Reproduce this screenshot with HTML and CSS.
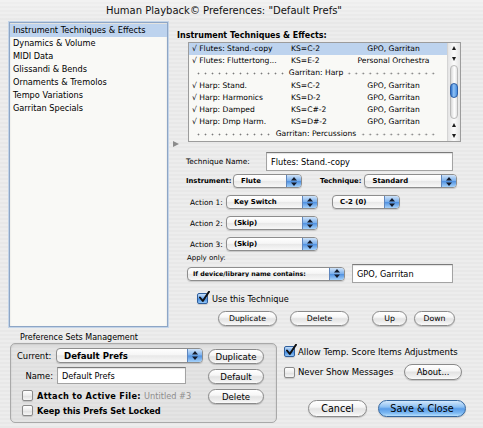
FILE: index.html
```html
<!DOCTYPE html>
<html>
<head>
<meta charset="utf-8">
<title>Human Playback Preferences</title>
<link rel="stylesheet" href="styles.css">
</head>
<body>
<div class="window">
  <div class="titlebar">Human Playback© Preferences: "Default Prefs"</div>

  <div class="top">
    <ul class="cats">
      <li class="sel">Instrument Techniques &amp; Effects</li>
      <li>Dynamics &amp; Volume</li>
      <li>MIDI Data</li>
      <li>Glissandi &amp; Bends</li>
      <li>Ornaments &amp; Tremolos</li>
      <li>Tempo Variations</li>
      <li>Garritan Specials</li>
    </ul>

    <div class="panel">
      <div class="heading">Instrument Techniques &amp; Effects:</div>
      <div class="tablerow">
        <span class="disclosure"></span>
        <div class="table">
          <div class="rows">
            <div class="row sel"><span class="c1">√ Flutes: Stand.-copy</span><span class="c2">KS=C-2</span><span class="c3">GPO, Garritan</span></div>
            <div class="row"><span class="c1">√ Flutes: Fluttertong...</span><span class="c2">KS=E-2</span><span class="c3">Personal Orchestra</span></div>
            <div class="row sep"><span>Garritan: Harp</span></div>
            <div class="row"><span class="c1">√ Harp: Stand.</span><span class="c2">KS=C-2</span><span class="c3">GPO, Garritan</span></div>
            <div class="row"><span class="c1">√ Harp: Harmonics</span><span class="c2">KS=D-2</span><span class="c3">GPO, Garritan</span></div>
            <div class="row"><span class="c1">√ Harp: Damped</span><span class="c2">KS=C#-2</span><span class="c3">GPO, Garritan</span></div>
            <div class="row"><span class="c1">√ Harp: Dmp Harm.</span><span class="c2">KS=D#-2</span><span class="c3">GPO, Garritan</span></div>
            <div class="row sep"><span>Garritan: Percussions</span></div>
          </div>
          <div class="scroll">
            <span class="sa up"></span>
            <span class="sa down"></span>
            <div class="track"><span class="thumb"></span></div>
            <span class="sa up"></span>
            <span class="sa down"></span>
          </div>
        </div>
      </div>

      <div class="frow r-name">
        <span class="lbl l-name">Technique Name:</span>
        <div class="field f-name">Flutes: Stand.-copy</div>
      </div>

      <div class="frow r-inst">
        <span class="lbl bold l-inst">Instrument:</span>
        <div class="popup p-inst"><span class="txt">Flute</span><span class="arr"><svg viewBox="0 0 6 9" width="6" height="9"><path d="M0 3.6L3 0L6 3.6Z M0 5.4L3 9L6 5.4Z"/></svg></span></div>
        <span class="lbl bold l-tech">Technique:</span>
        <div class="popup p-tech"><span class="txt">Standard</span><span class="arr"><svg viewBox="0 0 6 9" width="6" height="9"><path d="M0 3.6L3 0L6 3.6Z M0 5.4L3 9L6 5.4Z"/></svg></span></div>
      </div>

      <div class="frow r-act first">
        <span class="lbl l-act">Action 1:</span>
        <div class="popup p-act"><span class="txt">Key Switch</span><span class="arr"><svg viewBox="0 0 6 9" width="6" height="9"><path d="M0 3.6L3 0L6 3.6Z M0 5.4L3 9L6 5.4Z"/></svg></span></div>
        <div class="popup p-key"><span class="txt">C-2 (0)</span><span class="arr"><svg viewBox="0 0 6 9" width="6" height="9"><path d="M0 3.6L3 0L6 3.6Z M0 5.4L3 9L6 5.4Z"/></svg></span></div>
      </div>
      <div class="frow r-act">
        <span class="lbl l-act">Action 2:</span>
        <div class="popup p-act"><span class="txt">(Skip)</span><span class="arr"><svg viewBox="0 0 6 9" width="6" height="9"><path d="M0 3.6L3 0L6 3.6Z M0 5.4L3 9L6 5.4Z"/></svg></span></div>
      </div>
      <div class="frow r-act">
        <span class="lbl l-act">Action 3:</span>
        <div class="popup p-act"><span class="txt">(Skip)</span><span class="arr"><svg viewBox="0 0 6 9" width="6" height="9"><path d="M0 3.6L3 0L6 3.6Z M0 5.4L3 9L6 5.4Z"/></svg></span></div>
      </div>

      <div class="apply-lbl">Apply only:</div>
      <div class="frow r-apply">
        <div class="popup p-apply"><span class="txt">If device/library name contains:</span><span class="arr"><svg viewBox="0 0 6 9" width="6" height="9"><path d="M0 3.6L3 0L6 3.6Z M0 5.4L3 9L6 5.4Z"/></svg></span></div>
        <div class="field f-apply">GPO, Garritan</div>
      </div>

      <div class="frow r-use">
        <span class="cb on"><svg viewBox="0 0 12 12"><path d="M2 6.5L4.8 10L11 0.8"/></svg></span>
        <span class="cbl">Use this Technique</span>
      </div>

      <div class="frow r-btns">
        <span class="btn b-dup">Duplicate</span>
        <span class="btn b-del">Delete</span>
        <span class="btn b-up">Up</span>
        <span class="btn b-down">Down</span>
      </div>
    </div>
  </div>

  <div class="bottom">
    <div class="prefs">
      <div class="group-lbl">Preference Sets Management</div>
      <div class="group">
        <div class="gleft">
          <div class="frow g-r1">
            <span class="glbl l-cur">Current:</span>
            <div class="popup p-cur"><span class="txt">Default Prefs</span><span class="arr"><svg viewBox="0 0 6 9" width="6" height="9"><path d="M0 3.6L3 0L6 3.6Z M0 5.4L3 9L6 5.4Z"/></svg></span></div>
          </div>
          <div class="frow g-r2">
            <span class="glbl l-nm">Name:</span>
            <div class="field f-nm">Default Prefs</div>
          </div>
          <div class="frow g-r3">
            <span class="cb"></span>
            <span class="cbl strong attach">Attach to Active File: <span class="dim">Untitled #3</span></span>
          </div>
          <div class="frow g-r4">
            <span class="cb"></span>
            <span class="cbl strong">Keep this Prefs Set Locked</span>
          </div>
        </div>
        <div class="gright">
          <span class="btn gbtn">Duplicate</span>
          <span class="btn gbtn">Default</span>
          <span class="btn gbtn">Delete</span>
        </div>
      </div>
    </div>

    <div class="options">
      <div class="frow o-allow">
        <span class="cb on"><svg viewBox="0 0 12 12"><path d="M2 6.5L4.8 10L11 0.8"/></svg></span>
        <span class="cbl big">Allow Temp. Score Items Adjustments</span>
      </div>
      <div class="frow o-never">
        <span class="cb"></span>
        <span class="cbl big never">Never Show Messages</span>
        <span class="btn b-about">About...</span>
      </div>
      <div class="frow o-final">
        <span class="btn lg b-cancel">Cancel</span>
        <span class="btn lg default b-save">Save &amp; Close</span>
      </div>
    </div>
  </div>
</div>
</body>
</html>
```

FILE: styles.css
```css
html, body {
  margin: 0;
  padding: 0;
}
body {
  font-family: "DejaVu Sans", "Noto Sans", sans-serif;
  font-size: 8.2px;
  color: #000;
  background: #e9e9e9;
}
.window {
  width: 483px;
  height: 428px;
  overflow: hidden;
  display: flex;
  flex-direction: column;
  background: repeating-linear-gradient(to bottom, #ededed 0, #ededed 2px, #e8e8e8 2px, #e8e8e8 4px);
}
.titlebar {
  height: 21px;
  flex: none;
  display: flex;
  align-items: center;
  justify-content: center;
  padding-right: 35px;
  font-size: 10px;
  color: #111;
  background: linear-gradient(to bottom, rgba(255,255,255,0.3), rgba(255,255,255,0));
}

/* ---------- top part ---------- */
.top {
  display: flex;
  height: 306px;
  flex: none;
}
.cats {
  list-style: none;
  margin: 1px 0 0 9px;
  padding: 1px 0 0 0;
  width: 159px;
  height: 305px;
  box-sizing: border-box;
  background: #f9f9f6;
  border: 1px solid #8ea6c6;
  box-shadow: 0 0 0 1px #c3d4e8, inset 0 1px 2px rgba(0,0,0,0.12);
}
.cats li {
  height: 13px;
  line-height: 13px;
  padding-left: 3px;
  white-space: nowrap;
  font-size: 8.2px;
}
.cats li.sel {
  background: #bdd3ee;
}

.panel {
  margin-left: 4px;
  flex: 1;
  display: flex;
  flex-direction: column;
}
.heading {
  margin: 9px 0 0 5px;
  font-weight: bold;
  font-size: 8px;
  line-height: 11px;
  height: 11px;
}
.tablerow {
  display: flex;
  align-items: flex-end;
  margin-top: 1px;
}
.disclosure {
  width: 0;
  height: 0;
  border-left: 6px solid #8b8b8b;
  border-top: 3.5px solid transparent;
  border-bottom: 3.5px solid transparent;
  margin: 0 9px -5px 1px;
}
.table {
  width: 273px;
  height: 100px;
  box-sizing: border-box;
  border: 1px solid #9c9c9c;
  background: #f9f9f6;
  display: flex;
  box-shadow: inset 0 1px 1px rgba(0,0,0,0.1);
}
.rows {
  flex: 1;
  overflow: hidden;
}
.row {
  height: 12.2px;
  line-height: 12.2px;
  display: flex;
  font-size: 7.6px;
  white-space: nowrap;
}
.row.sel {
  background: #bdd3ee;
}
.c1 {
  width: 99px;
  padding-left: 3px;
  overflow: hidden;
}
.c2 {
  width: 49px;
}
.c3 {
  flex: 1;
  text-align: center;
}
.row.sep {
  align-items: center;
  padding: 0 10px 0 6px;
}
.row.sep::before,
.row.sep::after {
  content: "";
  flex: 1;
  height: 3px;
  background-image: radial-gradient(circle, #7a7a7a 0.8px, transparent 1.1px);
  background-size: 7px 3px;
}
.row.sep::after {
  background-position: right center;
}
.row.sep span {
  padding: 0 2px;
}

.scroll {
  width: 13px;
  flex: none;
  display: flex;
  flex-direction: column;
  align-items: center;
  background: linear-gradient(to right, #e4e4e4, #fbfbfb 50%, #e4e4e4);
  border-left: 1px solid #d4d4d4;
  box-sizing: border-box;
}
.sa {
  height: 10.5px;
  width: 100%;
  display: flex;
  align-items: center;
  justify-content: center;
}
.sa::after {
  content: "";
  width: 0;
  height: 0;
  border-left: 2.5px solid transparent;
  border-right: 2.5px solid transparent;
}
.sa.up::after {
  border-bottom: 4px solid #1d1d1d;
}
.sa.down::after {
  border-top: 4px solid #1d1d1d;
}
.track {
  flex: 1;
  width: 8px;
  margin: 1px 0 1px;
  border-radius: 4px;
  border: 1px solid #b9b9b9;
  background: linear-gradient(to right, #d8d8d8, #ffffff 55%, #e6e6e6);
  box-sizing: border-box;
  display: flex;
  flex-direction: column;
  align-items: center;
}
.thumb {
  margin-top: 17px;
  width: 8px;
  height: 15px;
  border-radius: 4px;
  border: 1px solid #2d5fa6;
  box-sizing: border-box;
  background: linear-gradient(to right, #2d6fc8, #8fc2f6 45%, #4a8fe0);
}

/* ---------- form rows ---------- */
.frow {
  display: flex;
  align-items: center;
  flex: none;
}
.lbl {
  font-size: 7.4px;
  white-space: nowrap;
  flex: none;
}
.lbl.bold {
  font-weight: bold;
  font-size: 6.8px;
}
.field {
  box-sizing: border-box;
  background: #ffffff;
  border: 1px solid #a3a3a3;
  border-top-color: #7a7a7a;
  box-shadow: inset 0 1px 1px rgba(0,0,0,0.12);
  font-size: 8.2px;
  display: flex;
  align-items: center;
  padding-left: 4px;
  white-space: nowrap;
  flex: none;
}
.popup {
  display: flex;
  align-items: center;
  height: 14px;
  box-sizing: border-box;
  border: 1px solid #8d8d8d;
  border-radius: 4px;
  overflow: hidden;
  background: linear-gradient(to bottom, #ffffff, #f6f6f6 45%, #e8e8e8 52%, #f8f8f8);
  box-shadow: 0 1px 1px rgba(0,0,0,0.15);
  font-weight: bold;
  font-size: 6.9px;
  white-space: nowrap;
  flex: none;
}
.popup .txt {
  flex: 1;
  padding-left: 7px;
  overflow: hidden;
}
.popup .arr {
  width: 14px;
  align-self: stretch;
  flex: none;
  display: flex;
  align-items: center;
  justify-content: center;
  border-left: 1px solid #5f86bd;
  background: linear-gradient(to bottom, #cfe3f9, #7bb0ec 48%, #4f90e0 52%, #a6d2fa);
}
.popup .arr svg {
  fill: #141c2c;
}

.r-name {
  margin-top: 10px;
  height: 19px;
}
.l-name {
  margin-left: 14px;
  width: 80px;
}
.f-name {
  width: 187px;
  height: 19px;
}
.r-inst {
  margin-top: 3px;
  height: 14px;
}
.l-inst {
  margin-left: 14px;
  width: 47px;
}
.p-inst {
  width: 69px;
}
.l-tech {
  margin-left: 18px;
  margin-right: 3px;
}
.p-tech {
  width: 93px;
}
.r-act {
  margin-top: 7px;
  height: 14px;
}
.l-act {
  margin-left: 18px;
  width: 36px;
}
.p-act {
  width: 92px;
}
.p-key {
  margin-left: 14px;
  width: 68px;
}
.apply-lbl {
  margin: 3px 0 0 15px;
  height: 9px;
  line-height: 9px;
  font-size: 7px;
}
.r-apply {
  margin-top: 1px;
  height: 19px;
}
.p-apply {
  margin-left: 15px;
  width: 158px;
  font-size: 6.3px;
}
.p-apply .txt {
  padding-left: 5px;
}
.f-apply {
  margin-left: 7px;
  width: 101px;
  height: 19px;
}
.r-use {
  margin-top: 10px;
  height: 11px;
}
.r-use .cb {
  margin-left: 25px;
}

/* checkboxes */
.cb {
  position: relative;
  width: 11px;
  height: 11px;
  flex: none;
  box-sizing: border-box;
  border: 1px solid #8a8a8a;
  border-radius: 2px;
  background: linear-gradient(to bottom, #ffffff, #ececec 50%, #e0e0e0 55%, #f6f6f6);
  box-shadow: 0 1px 1px rgba(0,0,0,0.15);
}
.cb.on {
  border-color: #2f5e9c;
  background: linear-gradient(to bottom, #c4def9, #6ea7ea 48%, #3f86dc 52%, #92c6f7);
}
.cb svg {
  position: absolute;
  left: 0;
  top: -3px;
  width: 12px;
  height: 12px;
  fill: none;
  stroke: #111;
  stroke-width: 2;
  stroke-linecap: round;
  stroke-linejoin: round;
}
.cbl {
  margin-left: 4px;
  font-size: 8.2px;
  white-space: nowrap;
}
.cbl.strong {
  font-weight: bold;
  font-size: 8.2px;
}
.cbl.attach {
  letter-spacing: 0.3px;
}
.dim {
  color: #8d8d8d;
  font-weight: normal;
  letter-spacing: 0;
}

/* buttons */
.btn {
  display: flex;
  align-items: center;
  justify-content: center;
  height: 15px;
  box-sizing: border-box;
  border: 1px solid #8a8a8a;
  border-radius: 8px;
  background: linear-gradient(to bottom, #ffffff, #f6f6f6 40%, #e3e3e3 52%, #eeeeee 80%, #fbfbfb);
  box-shadow: 0 1px 1px rgba(0,0,0,0.18);
  font-size: 7.8px;
  white-space: nowrap;
  flex: none;
}
.btn.lg {
  height: 17px;
  border-radius: 9px;
  font-size: 9.6px;
}
.btn.default {
  border-color: #35679f;
  background: linear-gradient(to bottom, #d3e8fc, #8dc0f3 40%, #5a9de8 52%, #7cb8f2 80%, #b7e0fd);
}
.r-btns {
  margin-top: 7px;
  height: 15px;
}
.b-dup {
  margin-left: 46px;
  width: 59px;
}
.b-del {
  margin-left: 13px;
  width: 59px;
}
.b-up {
  margin-left: 23px;
  width: 35px;
}
.b-down {
  margin-left: 7px;
  width: 41px;
}

/* ---------- bottom part ---------- */
.bottom {
  display: flex;
  flex: 1;
}
.prefs {
  margin-left: 10px;
  width: 267px;
  display: flex;
  flex-direction: column;
}
.group-lbl {
  margin: 6px 0 0 10px;
  height: 9px;
  line-height: 9px;
  font-size: 8px;
  white-space: nowrap;
}
.group {
  margin-top: 1px;
  height: 80px;
  box-sizing: border-box;
  border: 1px solid #a9a9a9;
  border-radius: 5px;
  background: rgba(0,0,0,0.035);
  box-shadow: inset 0 1px 2px rgba(0,0,0,0.12);
  display: flex;
}
.gleft {
  width: 192px;
  padding-top: 4px;
  display: flex;
  flex-direction: column;
}
.glbl {
  font-size: 8.4px;
  white-space: nowrap;
}
.g-r1 {
  height: 15px;
}
.l-cur {
  margin-left: 6px;
  width: 39px;
}
.p-cur {
  width: 147px;
  height: 15px;
  font-size: 8.6px;
}
.p-cur .txt {
  padding-left: 7px;
}
.g-r2 {
  margin-top: 4px;
  height: 17px;
}
.l-nm {
  width: 42px;
  padding-right: 4px;
  text-align: right;
}
.f-nm {
  width: 129px;
  height: 17px;
}
.g-r3 {
  margin-top: 6px;
  height: 11px;
}
.g-r3 .cb,
.g-r4 .cb {
  margin-left: 11px;
}
.g-r4 {
  margin-top: 4px;
  height: 11px;
}
.gright {
  margin-left: 5px;
  padding-top: 5px;
  display: flex;
  flex-direction: column;
  gap: 5px;
}
.gbtn {
  width: 56px;
  font-size: 8.6px;
}

.options {
  margin-left: 7px;
  display: flex;
  flex-direction: column;
}
.o-allow {
  margin-top: 19px;
  height: 11px;
}
.cbl.big {
  margin-left: 3px;
  font-size: 8.5px;
}
.o-never {
  margin-top: 7px;
  height: 16px;
}
.never {
  width: 106px;
}
.b-about {
  width: 58px;
  height: 16px;
  font-size: 8.4px;
}
.o-final {
  margin-top: 20px;
  height: 17px;
}
.b-cancel {
  margin-left: 24px;
  width: 59px;
}
.b-save {
  margin-left: 11px;
  width: 88px;
}
```
